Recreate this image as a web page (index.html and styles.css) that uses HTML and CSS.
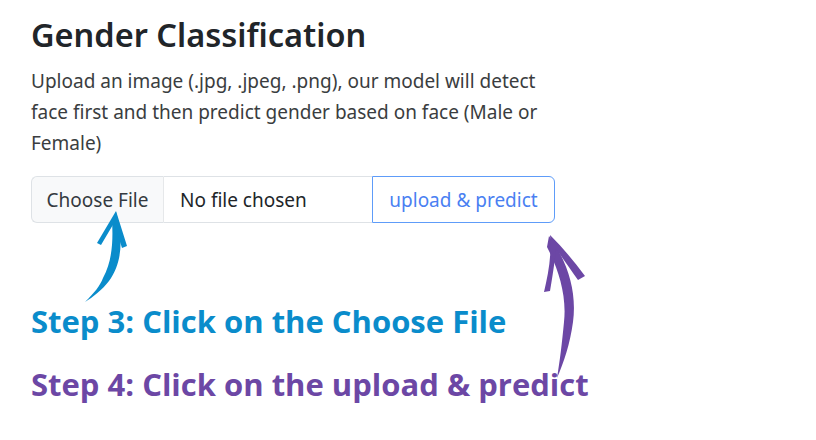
FILE: index.html
```html
<!DOCTYPE html>
<html lang="en">
<head>
<meta charset="utf-8">
<link rel="stylesheet" href="styles.css">
</head>
<body>
<main class="page">
  <h1 class="title">Gender Classification</h1>
  <p class="lead">Upload an image (.jpg, .jpeg, .png), our model will detect face first and then predict gender based on face (Male or Female)</p>
  <form class="upload">
    <div class="input-group">
      <span class="file-btn">Choose File</span>
      <span class="file-name">No file chosen</span>
      <button type="button" class="submit">upload &amp; predict</button>
    </div>
  </form>
  <p class="step step3">Step 3: Click on the Choose File</p>
  <p class="step step4">Step 4: Click on the upload &amp; predict</p>
  <svg class="arrows" width="816" height="440" viewBox="0 0 816 440" aria-hidden="true">
    <path class="arrow-blue" d="M116 212 C123 236 123 262 109 281 C102 290 93 297 85 302 C94 293 100 286 103 278 C113 260 113 238 112 220 Z"/>
    <path class="arrow-blue" d="M116 211 L97 243 L101 245 L114 223 L122 248 L127 246 Z"/>
    <path class="arrow-purple" d="M549 236 C568 262 577 292 573 322 C570 344 564 362 557 378 C560 360 562 343 564 322 C567 295 558 268 547 247 Z"/>
    <path class="arrow-purple" d="M550 235 C552 255 548 275 544 292 L550 291 C553 274 555 259 556 249 C564 260 571 270 578 280 L585 276 C574 261 562 247 550 235 Z"/>
  </svg>
</main>
</body>
</html>
```

FILE: styles.css
```css
html, body {
  margin: 0;
  padding: 0;
  background: #ffffff;
}
.page {
  position: relative;
  width: 816px;
  height: 440px;
  padding: 0 0 0 31px;
  box-sizing: border-box;
  overflow: hidden;
  font-family: "Noto Sans", "Open Sans", sans-serif;
}
.title {
  margin: 0;
  padding-top: 12px;
  font-size: 32.5px;
  line-height: 46px;
  font-weight: 600;
  color: #212529;
}
.lead {
  margin: 8px 0 0 0;
  width: 530px;
  font-size: 19px;
  line-height: 31px;
  color: #3a3d40;
}
.upload {
  margin-top: 17px;
}
.input-group {
  display: flex;
  height: 47px;
  align-items: stretch;
}
.file-btn {
  display: flex;
  align-items: center;
  justify-content: center;
  width: 133px;
  box-sizing: border-box;
  white-space: nowrap;
  background: #f8f9fa;
  border: 1px solid #dee2e6;
  border-right-color: #e6e8ea;
  border-radius: 6px 0 0 6px;
  font-size: 19px;
  color: #343a40;
}
.file-name {
  display: flex;
  align-items: center;
  width: 208px;
  box-sizing: border-box;
  padding-left: 16px;
  white-space: nowrap;
  border-top: 1px solid #dee2e6;
  border-bottom: 1px solid #dee2e6;
  font-size: 19px;
  color: #212529;
}
.submit {
  width: 183px;
  box-sizing: border-box;
  margin: 0;
  padding: 0;
  background: #ffffff;
  border: 1px solid #5e9cf9;
  border-radius: 0 6px 6px 0;
  font-family: inherit;
  font-size: 19px;
  color: #4a7ff2;
}
.step {
  margin: 0;
  font-family: "Open Sans", "Noto Sans", sans-serif;
  font-weight: 700;
  font-size: 31px;
  line-height: 40px;
  letter-spacing: 0;
  white-space: nowrap;
}
.step3 {
  margin-top: 78px;
  color: #0a8ccb;
}
.step4 {
  margin-top: 23px;
  color: #6c47a5;
}
.arrows {
  position: absolute;
  left: 0;
  top: 0;
  pointer-events: none;
}
.arrow-blue {
  fill: #0a8ccb;
}
.arrow-purple {
  fill: #6c47a5;
}
```
